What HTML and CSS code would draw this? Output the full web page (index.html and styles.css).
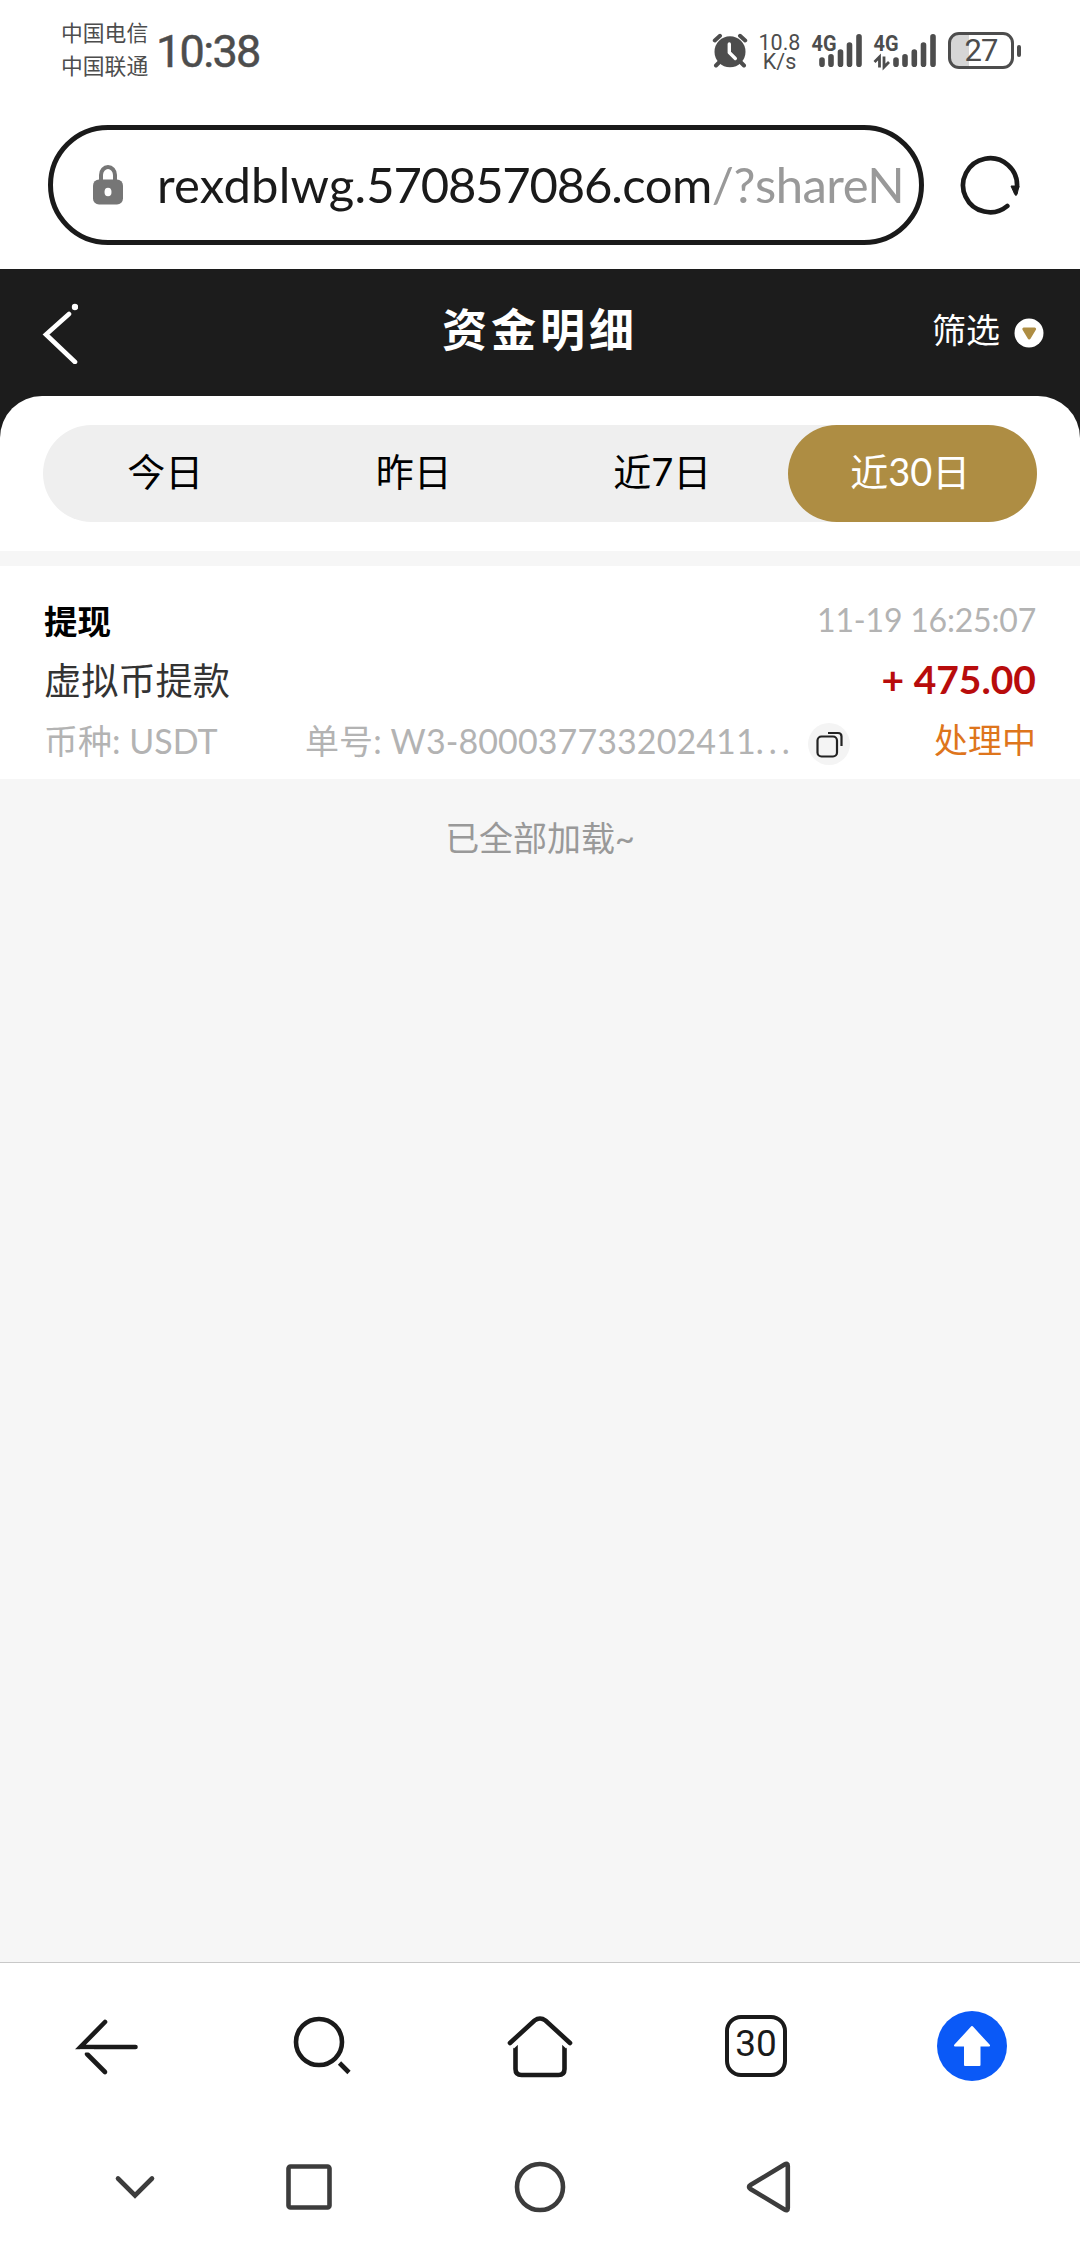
FILE: index.html
```html
<!DOCTYPE html>
<html lang="zh-CN">
<head>
<meta charset="utf-8">
<title>资金明细</title>
<link rel="stylesheet" href="styles.css">
</head>
<body>
<header class="status">
  <div class="carriers"><span>中国电信</span><span>中国联通</span></div>
  <span class="clock">10:38</span>
  <svg class="alarm" viewBox="0 0 36 35"><g fill="none" stroke="#4d4d4d" stroke-width="4" stroke-linecap="round"><path d="M7.500 29 4 32.500M28.500 29 32 32.500M2.800 7.500 8 2.800M33.200 7.500 28 2.800"/></g><circle cx="18" cy="18.700" r="15.500" fill="#4d4d4d"/><path d="M17.300 11v8.500l6 6" fill="none" stroke="#fff" stroke-width="3.400" stroke-linecap="round" stroke-linejoin="round"/></svg>
  <div class="speed"><span>10.8</span><span>K/s</span></div>
  <svg class="signal" viewBox="0 0 56 37"><text x="2.500" y="18.500" textLength="25" lengthAdjust="spacingAndGlyphs">4G</text><g stroke="#4d4d4d" stroke-width="5.600" stroke-linecap="round"><path d="M13 28v4.200M22 24.700v7.500M31.500 20v12.200M40.500 13v19.200M50 4.800v27.400"/></g></svg>
  <svg class="signal second" viewBox="0 0 66 37"><text x="2.500" y="18.500" textLength="25" lengthAdjust="spacingAndGlyphs">4G</text><g stroke="#4d4d4d" stroke-width="5.600" stroke-linecap="round"><path d="M25 28v4.200M34 24.700v7.500M43.300 20v12.200M52.500 13v19.200M62 4.800v27.400"/></g><path d="M3.500 30 8.500 25v10.500M13 24.500V35l5-5" fill="none" stroke="#4d4d4d" stroke-width="2.800"/></svg>
  <div class="battery">27</div><i class="nub"></i>
</header>
<div class="address">
  <div class="pill">
    <svg class="lock" viewBox="0 0 30 40"><rect y="14.500" width="30" height="25" rx="6" fill="#767676"/><path d="M8 17v-7a7 8 0 0 1 14 0v7" fill="none" stroke="#767676" stroke-width="4"/><ellipse cx="15" cy="27" rx="3.500" ry="4.300" fill="#fff"/></svg>
    <div class="url"><span class="sub">rexdblwg.</span><span class="digits">570857086</span>.com<span class="path">/?shareN</span></div>
  </div>
  <svg class="refresh" viewBox="0 0 60 60"><path d="M47.300 51A27 27 0 1 1 57 32" fill="none" stroke="#1a1a1a" stroke-width="4.700" stroke-linecap="round"/><path d="M51 31h8l-2 8.500q-1 1.800-2.200 0z" fill="#1a1a1a" stroke="#1a1a1a" stroke-linejoin="round"/></svg>
</div>
<nav class="appbar">
  <svg class="back" viewBox="0 0 36 62"><path d="M27 12 4 32.500 33 60" fill="none" stroke="#fff" stroke-width="4.600" stroke-linecap="round"/><circle cx="33" cy="5" r="3.200" fill="#fff"/></svg>
  <h1>资金明细</h1>
  <div class="filter"><span>筛选</span><svg viewBox="0 0 30 30"><circle cx="15" cy="15" r="14.500" fill="#fff"/><path d="M9.800 11h10.800l-5.400 9z" fill="#ae8d43" stroke="#ae8d43" stroke-width="3" stroke-linejoin="round"/></svg></div>
</nav>
<main>
  <div class="sheet">
    <section class="panel">
      <div class="tabs"><span>今日</span><span>昨日</span><span>近7日</span><span class="active">近30日</span></div>
    </section>
  </div>
  <article class="record">
    <div class="line head"><strong>提现</strong><time>11-19 16:25:07</time></div>
    <div class="line body"><span>虚拟币提款</span><span class="amount">+ 475.00</span></div>
    <div class="line meta"><span class="coin">币种: USDT</span><span class="order">单号: W3-800037733202411<span class="dots">...</span></span>
      <svg class="copy" viewBox="0 0 42 42"><circle cx="21" cy="21" r="21" fill="#f4f4f4"/><g fill="none" stroke="#222" stroke-width="2.200"><rect x="9.500" y="13.500" width="19.500" height="20" rx="4"/><path d="M20 10h10q3.500 0 3.500 3.500V23"/></g></svg>
      <span class="state">处理中</span></div>
  </article>
  <p class="done">已全部加载~</p>
</main>
<footer class="toolbar">
  <svg viewBox="0 0 80 80"><g fill="none" stroke="#1a1a1a" stroke-width="4.600" stroke-linecap="round"><path d="M67.500 41H12.500L37 16"/><path d="M37 66 19 48"/></g><path d="M12 45h14" stroke="#fff" stroke-width="3"/></svg>
  <svg viewBox="0 0 80 80"><circle cx="35" cy="36" r="23" fill="none" stroke="#1a1a1a" stroke-width="4.600"/><path d="m55.500 57 9.500 9.500" stroke="#1a1a1a" stroke-width="4.600"/></svg>
  <svg viewBox="0 0 80 80"><path d="M15.500 39v24q0 6 6 6h37q6 0 6-6V39" fill="none" stroke="#1a1a1a" stroke-width="4.600"/><path d="M11 39.500 18 33M69 39.500 62 33" stroke="#fff" stroke-width="8.500"/><path d="M10 37 34.500 14.500q5.500-4 11 0L70 37" fill="none" stroke="#1a1a1a" stroke-width="4.600" stroke-linecap="round"/></svg>
  <span class="count">30</span>
  <svg viewBox="0 0 80 80"><circle cx="40" cy="40" r="35" fill="#0a59f7"/><path d="M40 21 57 39.500H47.500V59H33V39.500H23z" fill="#fff" stroke="#fff" stroke-width="2" stroke-linejoin="round"/></svg>
</footer>
<footer class="sysnav">
  <svg viewBox="0 0 60 60"><path d="M13 21.500 30 38.500 47 21.500" /></svg>
  <svg viewBox="0 0 60 60"><rect x="9.500" y="9.500" width="41" height="41" rx="2"/></svg>
  <svg viewBox="0 0 60 60"><circle cx="30" cy="30" r="23"/></svg>
  <svg viewBox="0 0 60 60"><path d="M46.500 7.500q3.300-2 3.300 1.500v42q0 3.500-3.300 1.500L12.500 32q-3-2 0-4z"/></svg>
</footer>
</body>
</html>
```
FILE: styles.css
```css
*{box-sizing:border-box;margin:0;padding:0}
body{width:1080px;height:2244px;overflow:hidden;background:#fff;display:flex;flex-direction:column;font-family:Lato,"Noto Sans CJK SC",sans-serif;color:#1a1a1a}
svg{display:block;flex:none}

.status{height:125px;display:flex;align-items:flex-start;padding:32px 59px 0 61px;color:#4d4d4d}
.carriers{display:flex;flex-direction:column;font-size:21.800px;line-height:33px;margin-top:-16px;width:95px}
.clock{font:400 45px/40px Roboto,sans-serif;letter-spacing:-1.700px;-webkit-text-stroke:.5px #4d4d4d}
.alarm{width:36px;height:35px;margin:1px 0 0 auto}
.speed{display:flex;flex-direction:column;align-items:center;font:21.500px/19px Roboto,sans-serif;width:61px;padding:1px 0 0 2px}
.signal{width:56px;height:37px;overflow:visible}
.signal text{font:bold 22.500px Roboto,sans-serif;fill:#4d4d4d}
.second{width:66px;margin-left:6px}
.battery{width:66px;height:37px;margin-left:11px;border:3px solid #4d4d4d;border-radius:11px;background:linear-gradient(90deg,#d6d6d6 18px,#fff 18px);font:31px/32px Roboto,sans-serif;letter-spacing:-1px;text-align:center}
.nub{width:4px;height:12px;margin:13px 0 0 3px;border-radius:2px;background:#4d4d4d}

.address{height:144px;display:flex;flex:none;padding-left:48px}
.pill{width:876px;height:120px;border:5px solid #1a1a1a;border-radius:60px;display:flex;align-items:center;padding-left:40px}
.lock{width:30px;height:40px}
.url{margin-left:34px;width:744px;overflow:hidden;white-space:nowrap;font-size:49px;line-height:70px;letter-spacing:-.5px;padding-bottom:2px}
.sub{letter-spacing:.2px}
.digits{letter-spacing:-1.200px}
.path{color:#999}
.refresh{width:60px;height:60px;margin:30px 0 0 36px}

.appbar{height:127px;flex:none;background:#1c1c1c;color:#fff;display:grid;grid-template-columns:1fr auto 1fr;align-items:center;padding:0 36px 0 42px}
.back{width:36px;height:62px}
h1{font-size:45px;line-height:60px;letter-spacing:4px;padding-bottom:5px;margin-left:-6px}
.filter{display:flex;align-items:center;justify-content:flex-end;gap:14px;font-size:34px}
.filter span{line-height:50px;padding-bottom:5px}
.filter svg{width:30px}

main{flex:1;background:#f6f6f6}
.sheet{background:#1c1c1c}
.panel{height:155px;background:#fff;padding:29px 43px;border-radius:42px 42px 0 0}
.tabs{height:97px;border-radius:49px;background:#efefef;display:grid;grid-template-columns:repeat(4,1fr);text-align:center;font-size:38px;line-height:92px;color:#000}
.tabs span{padding-right:4px;border-radius:49px}
.tabs .active{background:#ae8d43;color:#fff;margin-left:-1px}

.record{margin-top:15px;height:213px;background:#fff;padding:24px 44px 0}
.line{display:flex;justify-content:space-between;align-items:center;height:59px}
.head{font-size:33.500px;color:#000}
time{font-size:32px;letter-spacing:-.2px;color:#b3b3b3}
.body{font-size:37.200px;color:#333}
.amount{font-weight:bold;font-size:39px;color:#b80c0c}
.meta{height:63px;font-size:34px;color:#b3b3b3}
.coin{width:261px}
.order{width:503px;white-space:nowrap;letter-spacing:.1px}
.dots{letter-spacing:5px}
.copy{width:42px;margin-top:8px}
.state{flex:1;text-align:right;color:#de751c;padding-bottom:2px}
.done{text-align:center;font-size:34px;line-height:118px;color:#999}

.toolbar,.sysnav{flex:none;background:#fff}
.toolbar{height:168px;border-top:1px solid #c8c8c8;padding-bottom:2px;display:grid;grid-template-columns:repeat(5,1fr);place-items:center}
.toolbar svg{width:80px;height:80px}
.count{width:62px;height:62px;border:4.500px solid #1a1a1a;border-radius:16px;font:37px/50px Roboto,sans-serif;text-align:center}
.sysnav{height:114px;display:flex;align-items:center;padding-left:105px}
.sysnav svg{width:60px;height:60px;fill:none;stroke:#3c3c3c;stroke-width:4.600px;stroke-linecap:round}
.sysnav svg:nth-child(2){margin-left:114px}
.sysnav svg:nth-child(3){margin-left:171px}
.sysnav svg:nth-child(4){margin-left:168px}
```
